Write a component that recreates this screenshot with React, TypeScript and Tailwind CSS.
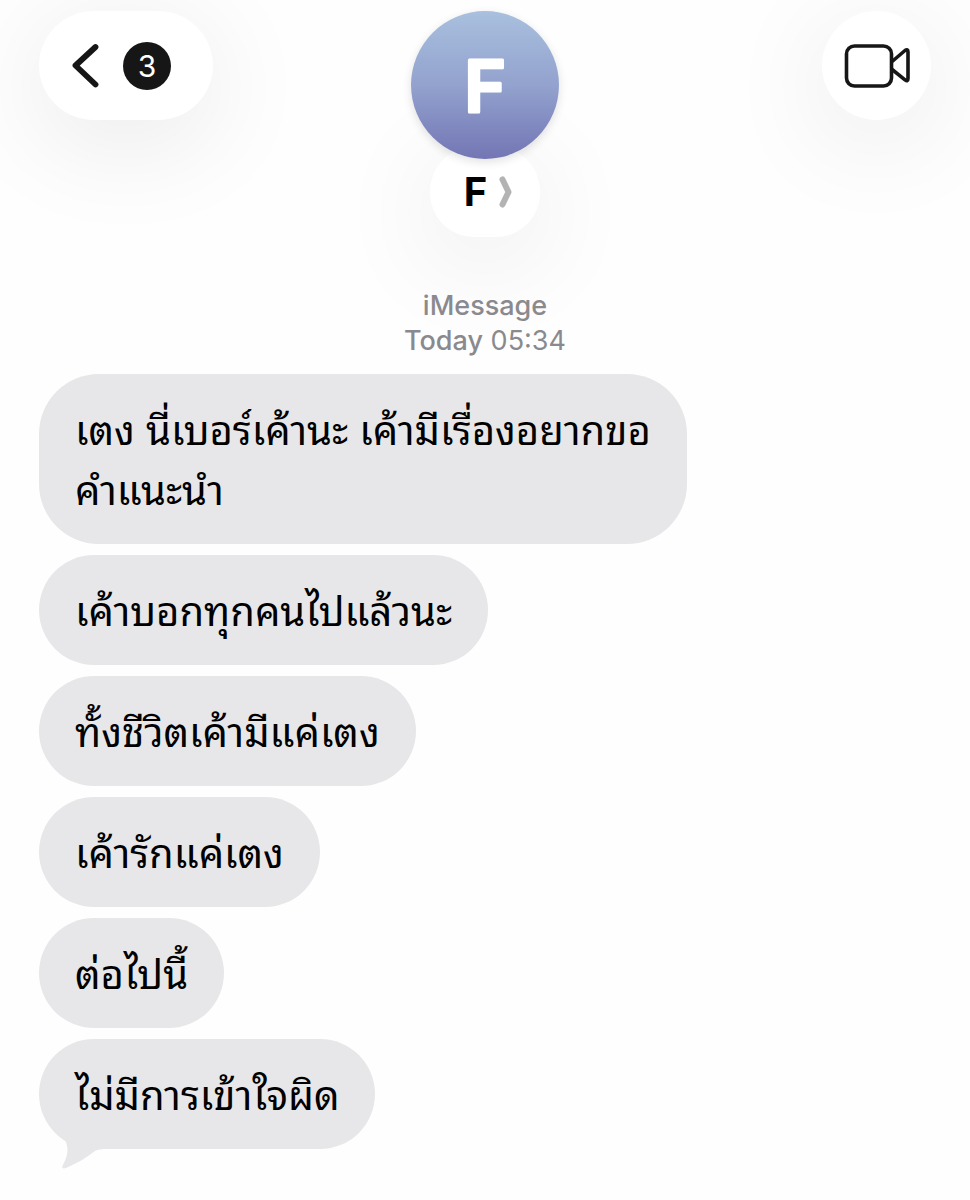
interface Message {
  id: number;
  text: string;
}

const messages: Message[] = [
  { id: 1, text: 'เตง นี่เบอร์เค้านะ เค้ามีเรื่องอยากขอ\nคำแนะนำ' },
  { id: 2, text: 'เค้าบอกทุกคนไปแล้วนะ' },
  { id: 3, text: 'ทั้งชีวิตเค้ามีแค่เตง' },
  { id: 4, text: 'เค้ารักแค่เตง' },
  { id: 5, text: 'ต่อไปนี้' },
  { id: 6, text: 'ไม่มีการเข้าใจผิด' },
];

function BackButton({ unread }: { unread: number }) {
  return (
    <button
      type="button"
      aria-label="Back"
      className="flex h-[109px] items-center gap-6 rounded-full bg-white pl-8 pr-[42px] shadow-[0_20px_110px_rgba(0,0,0,0.09)]"
    >
      <svg width="28" height="46" viewBox="0 0 28 46" fill="none" aria-hidden="true">
        <path d="M24.500 4 4.500 22.500l20 19" stroke="#161616" strokeWidth="5.800" strokeLinecap="round" strokeLinejoin="round" />
      </svg>
      <span className="flex size-12 items-center justify-center rounded-full bg-[#161616] text-[30px] leading-none text-white">
        {unread}
      </span>
    </button>
  );
}

function VideoButton() {
  return (
    <button
      type="button"
      aria-label="FaceTime"
      className="flex size-[109px] items-center justify-center rounded-full bg-white shadow-[0_20px_110px_rgba(0,0,0,0.09)]"
    >
      <svg width="66" height="44" viewBox="0 0 66 44" fill="none" stroke="#161616" strokeWidth="3.600" strokeLinejoin="round" aria-hidden="true">
        <rect x="2.500" y="2" width="45" height="40" rx="8" />
        <path d="M47.500 18 61 6.500Q64 4.500 64 8V34.500Q64 38 61 35.800L47.500 25" />
      </svg>
    </button>
  );
}

function Contact({ name }: { name: string }) {
  return (
    <div className="flex flex-col items-center">
      <div className="relative z-10 size-[148px] overflow-hidden rounded-full bg-linear-to-b from-[#a9c0de] via-[#93a2ce] to-[#7376b4] shadow-[0_3px_10px_rgba(0,0,0,0.12)]">
        <svg viewBox="0 0 148 148" className="size-full" aria-hidden="true">
          <text
            x="74"
            y="101"
            textAnchor="middle"
            fontFamily="Inter, sans-serif"
            fontWeight="600"
            fontSize="71"
            fill="#fff"
            stroke="#fff"
            strokeWidth="3"
            strokeLinejoin="round"
          >
            {name}
          </text>
        </svg>
      </div>
      <button
        type="button"
        className="-mt-3 flex h-[90px] w-[110px] items-center justify-center gap-3 rounded-[44px] bg-white pl-1.5 shadow-[0_20px_110px_rgba(0,0,0,0.09)]"
      >
        <span className="text-[40px] leading-none font-bold text-black">{name}</span>
        <svg width="13" height="32" viewBox="0 0 13 32" fill="none" aria-hidden="true">
          <path d="M3.500 3.500 9.500 16l-6 12.500" stroke="#b3b3b3" strokeWidth="6" strokeLinecap="round" strokeLinejoin="round" />
        </svg>
      </button>
    </div>
  );
}

function Bubble({ text, tail }: { text: string; tail: boolean }) {
  return (
    <li className="relative rounded-[60px] bg-[#e7e7e9] px-9 pt-[27px] pb-[23px] text-[40px] leading-[60px] whitespace-pre-line text-black">
      {text}
      {tail && (
        <svg width="60" height="46" viewBox="0 0 60 46" className="absolute -bottom-5 left-4" aria-hidden="true">
          <path d="M4 8C14 20 15 29 8 42c-2 3 0 4 3 3 12-5 21-11 29-17 4-2 8-2 14-2V6Z" fill="#e7e7e9" />
        </svg>
      )}
    </li>
  );
}

export default function App() {
  return (
    <div className="min-h-screen overflow-hidden bg-[#fefefe] font-[Inter,'Noto_Sans_Thai_Looped',Loma,Garuda,Waree,'Noto_Serif_Thai','Noto_Sans_Thai',sans-serif]">
      <header className="grid grid-cols-[1fr_auto_1fr] items-start px-[39px] pt-[11px]">
        <div className="flex justify-start">
          <BackButton unread={3} />
        </div>
        <Contact name="F" />
        <div className="flex justify-end">
          <VideoButton />
        </div>
      </header>

      <main className="px-[39px] pt-[51px]">
        <div className="text-center text-[27px] leading-[35px] text-[#8a8a8e]">
          <p className="font-medium">iMessage</p>
          <p>
            <span className="font-medium">Today</span> 05:34
          </p>
        </div>
        <ul className="mt-4 flex flex-col items-start gap-[11px]">
          {messages.map((message, index) => (
            <Bubble key={message.id} text={message.text} tail={index === messages.length - 1} />
          ))}
        </ul>
      </main>
    </div>
  );
}
